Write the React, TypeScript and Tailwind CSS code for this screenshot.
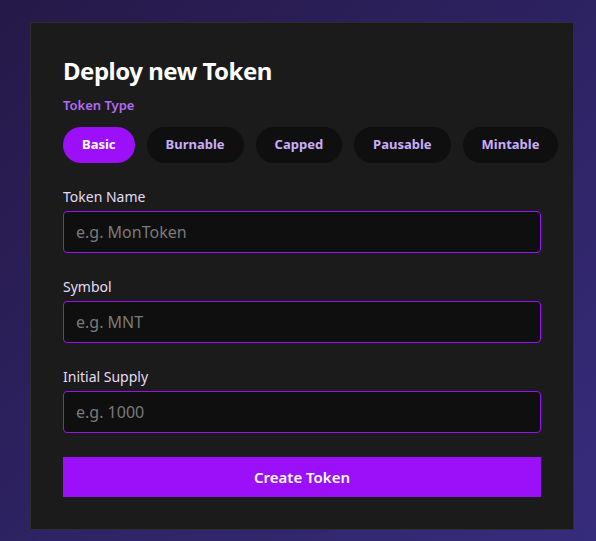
import React from "react";

const types = ["Basic", "Burnable", "Capped", "Pausable", "Mintable"];

function Field({ label, placeholder }: { label: string; placeholder: string }) {
  return (
    <div className="flex flex-col gap-1 mb-6">
      <label className="text-[14px] leading-5 text-[#e6dcf5]">{label}</label>
      <input
        placeholder={placeholder}
        className="h-[42px] w-full rounded-[4px] border border-[#9a10f5] bg-[#0f0f0f] px-3 text-[16px] text-white placeholder:text-[#7a7a7a] outline-none"
      />
    </div>
  );
}

export default function App() {
  return (
    <div
      className="min-h-screen w-full bg-gradient-to-br from-[#251948] to-[#362c7c] pl-[30px] pt-[22px]"
      style={{ fontFamily: '"Noto Sans", "Open Sans", sans-serif' }}
    >
      <div className="w-[544px] border border-[#2e2e2e] bg-[#1b1b1b] px-8 pt-8 pb-8">
        <h1 className="text-[24px] font-bold leading-8 tracking-[-0.5px] text-white">Deploy new Token</h1>
        <div className="mt-2 text-[13px] font-semibold leading-5 text-[#b06cf2]">Token Type</div>
        <div className="mt-3 flex gap-3">
          {types.map((t, i) => (
            <button
              key={t}
              className={
                i === 0
                  ? "h-9 shrink-0 rounded-full bg-[#9b0ff9] px-[19px] text-[13px] font-bold text-white"
                  : "h-9 shrink-0 rounded-full bg-[#0f0f0f] px-[19px] text-[13px] font-bold text-[#c9aefc]"
              }
            >
              {t}
            </button>
          ))}
        </div>
        <div className="mt-6">
          <Field label="Token Name" placeholder="e.g. MonToken" />
          <Field label="Symbol" placeholder="e.g. MNT" />
          <Field label="Initial Supply" placeholder="e.g. 1000" />
        </div>
        <button className="h-10 w-full bg-[#9b0ff9] text-[15px] font-semibold text-white">Create Token</button>
      </div>
    </div>
  );
}
